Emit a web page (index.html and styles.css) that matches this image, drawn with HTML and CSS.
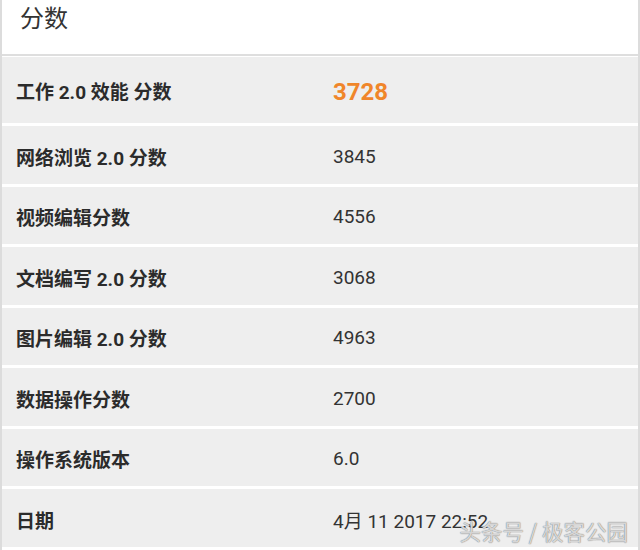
FILE: index.html
```html
<!DOCTYPE html>
<html lang="zh">
<head>
<meta charset="utf-8">
<link rel="stylesheet" href="styles.css">
</head>
<body>
<div class="panel">
  <div class="header">分数</div>
  <div class="rows">
    <div class="row first"><span class="label">工作 2.0 效能 分数</span><span class="value hl">3728</span></div>
    <div class="row"><span class="label">网络浏览 2.0 分数</span><span class="value">3845</span></div>
    <div class="row"><span class="label">视频编辑分数</span><span class="value">4556</span></div>
    <div class="row"><span class="label">文档编写 2.0 分数</span><span class="value">3068</span></div>
    <div class="row"><span class="label">图片编辑 2.0 分数</span><span class="value">4963</span></div>
    <div class="row"><span class="label">数据操作分数</span><span class="value">2700</span></div>
    <div class="row"><span class="label">操作系统版本</span><span class="value">6.0</span></div>
    <div class="row last"><span class="label">日期</span><span class="value">4月 11 2017 22:52</span></div>
  </div>
  <div class="watermark">头条号 / 极客公园</div>
</div>
</body>
</html>
```
FILE: styles.css
```css
html, body {
  margin: 0;
  padding: 0;
  background: #ffffff;
}
body {
  width: 640px;
  height: 550px;
  overflow: hidden;
  font-family: Roboto, "Noto Sans CJK SC", sans-serif;
  color: #2e2e2e;
}
.panel {
  position: relative;
  width: 640px;
  height: 550px;
  box-sizing: border-box;
  border-left: 2px solid #dcdcdc;
  border-right: 2px solid #dcdcdc;
  display: flex;
  flex-direction: column;
}
.header {
  height: 56px;
  box-sizing: border-box;
  padding: 4px 0 0 18px;
  font-size: 24px;
  line-height: 30px;
  color: #333;
  border-bottom: 2px solid #dedede;
  background: #fff;
}
.rows {
  display: flex;
  flex-direction: column;
  background: #ffffff;
  padding-top: 1px;
}
.row {
  height: 57.5px;
  box-sizing: border-box;
  padding-top: 3px;
  margin-top: 3px;
  background: #eeeeee;
  display: flex;
  align-items: center;
}
.row.first {
  height: 66px;
  margin-top: 0;
  padding-top: 1px;
}
.label {
  width: 317px;
  padding-left: 14px;
  font-size: 19px;
  font-weight: bold;
  font-family: Roboto, "Noto Sans CJK SC", sans-serif;
  color: #2b2b2b;
}
.value {
  font-size: 19px;
  color: #333;
}
.value.hl {
  font-size: 24px;
  font-weight: bold;
  color: #f0862a;
  position: relative;
  top: 1px;
}
.watermark {
  position: absolute;
  right: 10px;
  bottom: 4px;
  font-size: 21.5px;
  color: rgba(255, 255, 255, 0.7);
  text-shadow: 0 0 1px #777, 0 0 1px #999;
  font-family: "Noto Sans CJK SC", sans-serif;
}
```
